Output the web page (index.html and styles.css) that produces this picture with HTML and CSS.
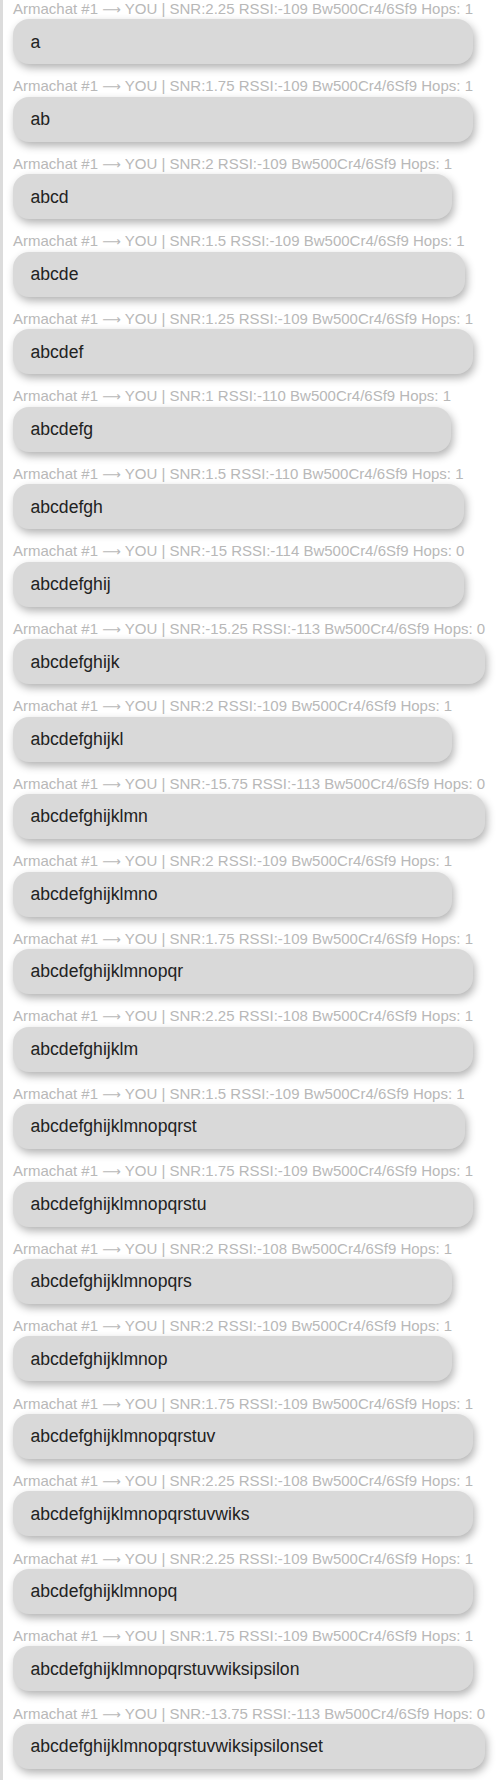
FILE: index.html
```html
<!DOCTYPE html>
<html>
<head>
<meta charset="utf-8">
<link rel="stylesheet" href="styles.css">
</head>
<body>
<div class="log">
  <div class="msg"><div class="meta">Armachat #1 <span class="arrow">⟶</span> YOU | SNR:2.25 RSSI:-109 Bw500Cr4/6Sf9 Hops: 1</div><div class="bubble">a</div></div>
  <div class="msg"><div class="meta">Armachat #1 <span class="arrow">⟶</span> YOU | SNR:1.75 RSSI:-109 Bw500Cr4/6Sf9 Hops: 1</div><div class="bubble">ab</div></div>
  <div class="msg"><div class="meta">Armachat #1 <span class="arrow">⟶</span> YOU | SNR:2 RSSI:-109 Bw500Cr4/6Sf9 Hops: 1</div><div class="bubble">abcd</div></div>
  <div class="msg"><div class="meta">Armachat #1 <span class="arrow">⟶</span> YOU | SNR:1.5 RSSI:-109 Bw500Cr4/6Sf9 Hops: 1</div><div class="bubble">abcde</div></div>
  <div class="msg"><div class="meta">Armachat #1 <span class="arrow">⟶</span> YOU | SNR:1.25 RSSI:-109 Bw500Cr4/6Sf9 Hops: 1</div><div class="bubble">abcdef</div></div>
  <div class="msg"><div class="meta">Armachat #1 <span class="arrow">⟶</span> YOU | SNR:1 RSSI:-110 Bw500Cr4/6Sf9 Hops: 1</div><div class="bubble">abcdefg</div></div>
  <div class="msg"><div class="meta">Armachat #1 <span class="arrow">⟶</span> YOU | SNR:1.5 RSSI:-110 Bw500Cr4/6Sf9 Hops: 1</div><div class="bubble">abcdefgh</div></div>
  <div class="msg"><div class="meta">Armachat #1 <span class="arrow">⟶</span> YOU | SNR:-15 RSSI:-114 Bw500Cr4/6Sf9 Hops: 0</div><div class="bubble">abcdefghij</div></div>
  <div class="msg"><div class="meta">Armachat #1 <span class="arrow">⟶</span> YOU | SNR:-15.25 RSSI:-113 Bw500Cr4/6Sf9 Hops: 0</div><div class="bubble">abcdefghijk</div></div>
  <div class="msg"><div class="meta">Armachat #1 <span class="arrow">⟶</span> YOU | SNR:2 RSSI:-109 Bw500Cr4/6Sf9 Hops: 1</div><div class="bubble">abcdefghijkl</div></div>
  <div class="msg"><div class="meta">Armachat #1 <span class="arrow">⟶</span> YOU | SNR:-15.75 RSSI:-113 Bw500Cr4/6Sf9 Hops: 0</div><div class="bubble">abcdefghijklmn</div></div>
  <div class="msg"><div class="meta">Armachat #1 <span class="arrow">⟶</span> YOU | SNR:2 RSSI:-109 Bw500Cr4/6Sf9 Hops: 1</div><div class="bubble">abcdefghijklmno</div></div>
  <div class="msg"><div class="meta">Armachat #1 <span class="arrow">⟶</span> YOU | SNR:1.75 RSSI:-109 Bw500Cr4/6Sf9 Hops: 1</div><div class="bubble">abcdefghijklmnopqr</div></div>
  <div class="msg"><div class="meta">Armachat #1 <span class="arrow">⟶</span> YOU | SNR:2.25 RSSI:-108 Bw500Cr4/6Sf9 Hops: 1</div><div class="bubble">abcdefghijklm</div></div>
  <div class="msg"><div class="meta">Armachat #1 <span class="arrow">⟶</span> YOU | SNR:1.5 RSSI:-109 Bw500Cr4/6Sf9 Hops: 1</div><div class="bubble">abcdefghijklmnopqrst</div></div>
  <div class="msg"><div class="meta">Armachat #1 <span class="arrow">⟶</span> YOU | SNR:1.75 RSSI:-109 Bw500Cr4/6Sf9 Hops: 1</div><div class="bubble">abcdefghijklmnopqrstu</div></div>
  <div class="msg"><div class="meta">Armachat #1 <span class="arrow">⟶</span> YOU | SNR:2 RSSI:-108 Bw500Cr4/6Sf9 Hops: 1</div><div class="bubble">abcdefghijklmnopqrs</div></div>
  <div class="msg"><div class="meta">Armachat #1 <span class="arrow">⟶</span> YOU | SNR:2 RSSI:-109 Bw500Cr4/6Sf9 Hops: 1</div><div class="bubble">abcdefghijklmnop</div></div>
  <div class="msg"><div class="meta">Armachat #1 <span class="arrow">⟶</span> YOU | SNR:1.75 RSSI:-109 Bw500Cr4/6Sf9 Hops: 1</div><div class="bubble">abcdefghijklmnopqrstuv</div></div>
  <div class="msg"><div class="meta">Armachat #1 <span class="arrow">⟶</span> YOU | SNR:2.25 RSSI:-108 Bw500Cr4/6Sf9 Hops: 1</div><div class="bubble">abcdefghijklmnopqrstuvwiks</div></div>
  <div class="msg"><div class="meta">Armachat #1 <span class="arrow">⟶</span> YOU | SNR:2.25 RSSI:-109 Bw500Cr4/6Sf9 Hops: 1</div><div class="bubble">abcdefghijklmnopq</div></div>
  <div class="msg"><div class="meta">Armachat #1 <span class="arrow">⟶</span> YOU | SNR:1.75 RSSI:-109 Bw500Cr4/6Sf9 Hops: 1</div><div class="bubble">abcdefghijklmnopqrstuvwiksipsilon</div></div>
  <div class="msg"><div class="meta">Armachat #1 <span class="arrow">⟶</span> YOU | SNR:-13.75 RSSI:-113 Bw500Cr4/6Sf9 Hops: 0</div><div class="bubble">abcdefghijklmnopqrstuvwiksipsilonset</div></div>
</div>
</body>
</html>
```
FILE: styles.css
```css
html, body {
  margin: 0;
  padding: 0;
  background: #fff;
}
body {
  font-family: "Liberation Sans", Arial, sans-serif;
}
.log {
  border-left: 3px solid #dcdcdc;
  padding-left: 10px;
  min-height: 1780px;
  box-sizing: border-box;
}
.msg {
  display: flex;
  flex-direction: column;
  width: fit-content;
  margin-bottom: 13.25px;
}
.meta {
  font-size: 15px;
  line-height: 17.25px;
  color: #b8b8b8;
  white-space: nowrap;
}
.arrow {
  font-family: "DejaVu Sans", sans-serif;
  font-size: 13px;
  line-height: 1;
}
.bubble {
  margin-top: 2px;
  background: #d9d9d9;
  color: #222;
  font-size: 17.6px;
  line-height: 20.2px;
  padding: 12.4px 17.5px;
  border-radius: 16px;
  box-shadow: 2px 4px 8px rgba(0, 0, 0, 0.3);
}
```
